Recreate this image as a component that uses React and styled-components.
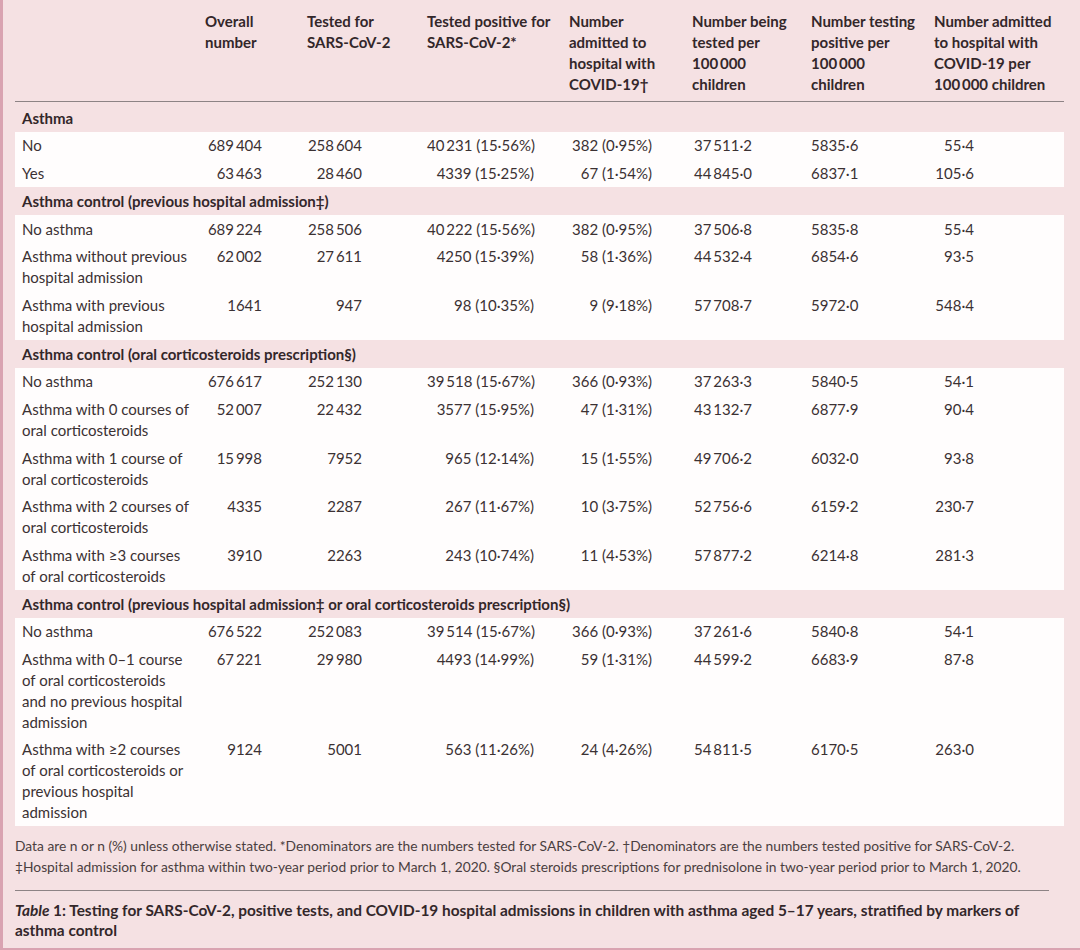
import React from 'react';
import styled, { createGlobalStyle } from 'styled-components';

const GlobalStyle = createGlobalStyle`
  html, body {
    margin: 0;
    padding: 0;
    background: #f5e1e3;
  }
  body {
    font-family: Lato, "Liberation Sans", sans-serif;
    color: #3b3133;
  }
`;

const COLUMNS = '190px 102px 120px 142px 123px 119px 123px 130px';
// space between each number's right edge and its column end
const NUM_PAD = [45, 65, 35, 40, 59, 76, 90];

const headers = [
  ['Overall', 'number'],
  ['Tested for', 'SARS-CoV-2'],
  ['Tested positive for', 'SARS-CoV-2*'],
  ['Number', 'admitted to', 'hospital with', 'COVID-19†'],
  ['Number being', 'tested per', '100\u2009000', 'children'],
  ['Number testing', 'positive per', '100\u2009000', 'children'],
  ['Number admitted', 'to hospital with', 'COVID-19 per', '100\u2009000 children'],
];

const t = (s) => s.replace(/_/g, '\u2009');

const sections = [
  {
    title: 'Asthma',
    rows: [
      [['No'], '689_404', '258_604', '40_231 (15·56%)', '382 (0·95%)', '37_511·2', '5835·6', '55·4'],
      [['Yes'], '63_463', '28_460', '4339 (15·25%)', '67 (1·54%)', '44_845·0', '6837·1', '105·6'],
    ],
  },
  {
    title: 'Asthma control (previous hospital admission‡)',
    rows: [
      [['No asthma'], '689_224', '258_506', '40_222 (15·56%)', '382 (0·95%)', '37_506·8', '5835·8', '55·4'],
      [['Asthma without previous', 'hospital admission'], '62_002', '27_611', '4250 (15·39%)', '58 (1·36%)', '44_532·4', '6854·6', '93·5'],
      [['Asthma with previous', 'hospital admission'], '1641', '947', '98 (10·35%)', '9 (9·18%)', '57_708·7', '5972·0', '548·4'],
    ],
  },
  {
    title: 'Asthma control (oral corticosteroids prescription§)',
    rows: [
      [['No asthma'], '676_617', '252_130', '39_518 (15·67%)', '366 (0·93%)', '37_263·3', '5840·5', '54·1'],
      [['Asthma with 0 courses of', 'oral corticosteroids'], '52_007', '22_432', '3577 (15·95%)', '47 (1·31%)', '43_132·7', '6877·9', '90·4'],
      [['Asthma with 1 course of', 'oral corticosteroids'], '15_998', '7952', '965 (12·14%)', '15 (1·55%)', '49_706·2', '6032·0', '93·8'],
      [['Asthma with 2 courses of', 'oral corticosteroids'], '4335', '2287', '267 (11·67%)', '10 (3·75%)', '52_756·6', '6159·2', '230·7'],
      [['Asthma with ≥3 courses', 'of oral corticosteroids'], '3910', '2263', '243 (10·74%)', '11 (4·53%)', '57_877·2', '6214·8', '281·3'],
    ],
  },
  {
    title: 'Asthma control (previous hospital admission‡ or oral corticosteroids prescription§)',
    rows: [
      [['No asthma'], '676_522', '252_083', '39_514 (15·67%)', '366 (0·93%)', '37_261·6', '5840·8', '54·1'],
      [['Asthma with 0–1 course', 'of oral corticosteroids', 'and no previous hospital', 'admission'], '67_221', '29_980', '4493 (14·99%)', '59 (1·31%)', '44_599·2', '6683·9', '87·8'],
      [['Asthma with ≥2 courses', 'of oral corticosteroids or', 'previous hospital', 'admission'], '9124', '5001', '563 (11·26%)', '24 (4·26%)', '54_811·5', '6170·5', '263·0'],
    ],
  },
];

const Page = styled.div`
  box-sizing: border-box;
  width: 1080px;
  height: 950px;
  padding: 0 16px 0 12px;
  background: #f5e1e3;
  border-left: 3px solid #d9a3b1;
  border-bottom: 2px solid #d9a3b1;
  overflow: hidden;
`;

const Row = styled.div`
  display: grid;
  grid-template-columns: ${COLUMNS};
  font-size: 15px;
  line-height: 20.8px;
`;

const HeaderRow = styled(Row)`
  padding: 11px 0 6px;
  border-bottom: 1px solid #8d8385;
  margin-bottom: 2px;
  line-height: 21px;
  color: #33272a;
  font-weight: 700;
`;

const HeaderCell = styled.div`
  white-space: nowrap;
`;

const SectionRow = styled.div`
  padding: 3.5px 7px;
  font-size: 15px;
  line-height: 20.8px;
  font-weight: 700;
  color: #33272a;
  white-space: nowrap;
`;

const Group = styled.div`
  background: #fffdfd;
`;

const DataRow = styled(Row)`
  padding: 3.5px 0;
`;

const LabelCell = styled.div`
  padding-left: 7px;
  white-space: nowrap;
`;

const NumCell = styled.div`
  text-align: right;
  padding-right: ${(p) => p.$pr}px;
  white-space: nowrap;
`;

const Notes = styled.div`
  margin-top: 9px;
  padding-bottom: 13px;
  border-bottom: 1px solid #8d8385;
  margin-right: 15px;
  font-size: 13.8px;
  line-height: 21px;
  color: #4a3e40;
  white-space: nowrap;
`;

const Caption = styled.div`
  padding-top: 10px;
  font-size: 15.4px;
  line-height: 19.5px;
  font-weight: 700;
  color: #33272a;
  white-space: nowrap;
`;

const Lines = ({ lines }) =>
  lines.map((l, i) => (
    <React.Fragment key={i}>
      {i > 0 && <br />}
      {l}
    </React.Fragment>
  ));

export default function App() {
  return (
    <>
      <GlobalStyle />
      <Page>
        <HeaderRow>
          <HeaderCell />
          {headers.map((h, i) => (
            <HeaderCell key={i}>
              <Lines lines={h} />
            </HeaderCell>
          ))}
        </HeaderRow>

        {sections.map((sec) => (
          <React.Fragment key={sec.title}>
            <SectionRow>{sec.title}</SectionRow>
            <Group>
              {sec.rows.map(([label, ...nums], ri) => (
                <DataRow key={ri}>
                  <LabelCell>
                    <Lines lines={label} />
                  </LabelCell>
                  {nums.map((n, ci) => (
                    <NumCell key={ci} $pr={NUM_PAD[ci]}>
                      {t(n)}
                    </NumCell>
                  ))}
                </DataRow>
              ))}
            </Group>
          </React.Fragment>
        ))}

        <Notes>
          Data are n or n (%) unless otherwise stated. *Denominators are the numbers tested for SARS-CoV-2. †Denominators are the numbers tested positive for SARS-CoV-2.
          <br />
          ‡Hospital admission for asthma within two-year period prior to March 1, 2020. §Oral steroids prescriptions for prednisolone in two-year period prior to March 1, 2020.
        </Notes>

        <Caption>
          <i>Table</i> 1: Testing for SARS-CoV-2, positive tests, and COVID-19 hospital admissions in children with asthma aged 5–17 years, stratified by markers of
          <br />
          asthma control
        </Caption>
      </Page>
    </>
  );
}
